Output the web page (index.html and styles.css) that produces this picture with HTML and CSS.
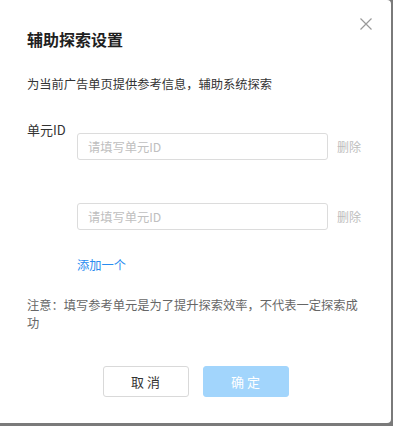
FILE: index.html
```html
<!DOCTYPE html>
<html lang="zh-CN">
<head>
<meta charset="utf-8">
<link rel="stylesheet" href="styles.css">
</head>
<body>
<div class="modal">
  <button class="close" aria-label="关闭">
    <svg width="12" height="12" viewBox="0 0 12 12"><path d="M0.5 0.5 L11.5 11.5 M11.5 0.5 L0.5 11.5" stroke="#9a9a9a" stroke-width="1.2" fill="none"/></svg>
  </button>
  <h2 class="title">辅助探索设置</h2>
  <p class="desc">为当前广告单页提供参考信息，辅助系统探索</p>
  <div class="form">
    <div class="label">单元ID</div>
    <div class="fields">
      <div class="field-row">
        <input class="input" type="text" placeholder="请填写单元ID">
        <span class="del">删除</span>
      </div>
      <div class="field-row">
        <input class="input" type="text" placeholder="请填写单元ID">
        <span class="del">删除</span>
      </div>
      <a class="add">添加一个</a>
    </div>
  </div>
  <p class="note">注意：填写参考单元是为了提升探索效率，不代表一定探索成功</p>
  <div class="footer">
    <button class="btn btn-cancel">取 消</button>
    <button class="btn btn-ok">确 定</button>
  </div>
</div>
</body>
</html>
```

FILE: styles.css
```css
* { box-sizing: border-box; }
html, body { margin: 0; padding: 0; }
body {
  width: 393px;
  height: 426px;
  background: #7a7a7a;
  font-family: "Noto Sans CJK SC", "Noto Sans", sans-serif;
  overflow: hidden;
}
.modal {
  position: relative;
  width: 391px;
  height: 423px;
  background: #fff;
  border-radius: 0 4px 4px 0;
  padding: 28px 27px 27px 27px;
}
.close {
  position: absolute;
  top: 18px;
  right: 19px;
  width: 12px;
  height: 12px;
  padding: 0;
  border: 0;
  background: none;
  display: flex;
}
.title {
  margin: 0;
  font-size: 16px;
  line-height: 22px;
  font-weight: 700;
  color: #1f1f1f;
}
.desc {
  margin: 25px 0 0;
  font-size: 12.25px;
  line-height: 18px;
  color: #333;
}
.form {
  margin-top: 28px;
  display: grid;
  grid-template-columns: 50px 1fr;
}
.label {
  font-size: 13px;
  line-height: 18px;
  color: #333;
}
.fields {
  margin-top: 12px;
  display: flex;
  flex-direction: column;
  align-items: flex-start;
}
.field-row {
  display: flex;
  align-items: center;
  gap: 9px;
}
.field-row + .field-row { margin-top: 43px; }
.input {
  width: 251px;
  height: 27px;
  border: 1px solid #dcdcdc;
  border-radius: 3px;
  padding: 0 10px;
  font-family: inherit;
  font-size: 12.25px;
  color: #333;
  outline: none;
}
.input::placeholder { color: #c0c0c0; }
.del {
  font-size: 12px;
  line-height: 18px;
  color: #bdbdbd;
}
.add {
  margin-top: 26px;
  font-size: 12.25px;
  line-height: 18px;
  color: #2a8cf0;
}
.note {
  margin: 22px 0 0;
  font-size: 12.25px;
  line-height: 18px;
  color: #666;
}
.footer {
  margin-top: 34px;
  display: flex;
  justify-content: center;
  gap: 14px;
}
.btn {
  width: 86px;
  height: 31px;
  border-radius: 3px;
  font-family: inherit;
  font-size: 13px;
  padding: 0;
}
.btn-cancel {
  background: #fff;
  border: 1px solid #d9d9d9;
  color: #333;
}
.btn-ok {
  background: #a2d5fc;
  border: 1px solid #a2d5fc;
  color: #fff;
}
```
